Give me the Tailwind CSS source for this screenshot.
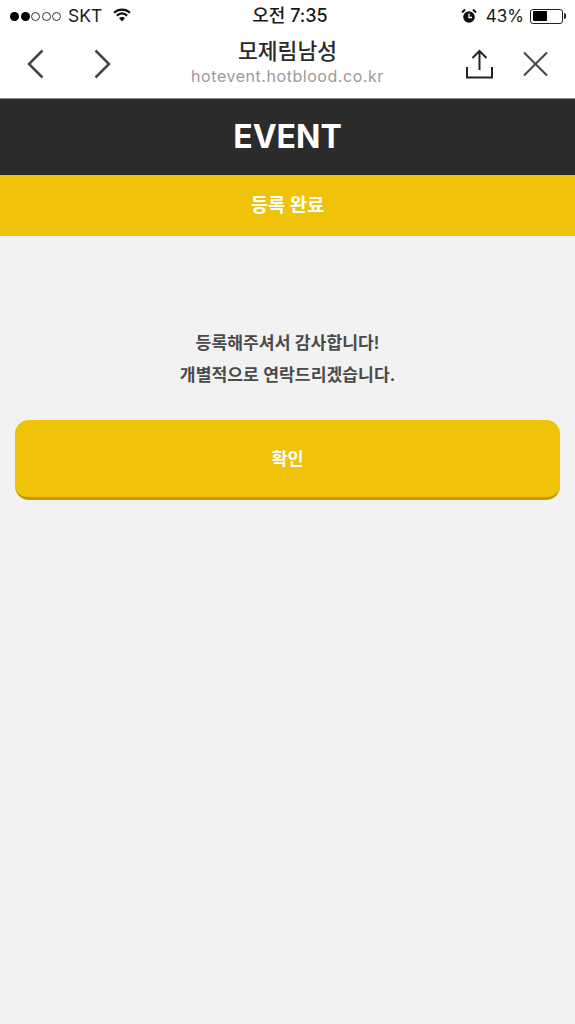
<!doctype html>
<html lang="ko">
<head>
<meta charset="utf-8">
<script src="https://cdn.jsdelivr.net/npm/@tailwindcss/browser@4"></script>
</head>
<body class="bg-[#f2f2f2] font-['Inter','Noto_Sans_CJK_KR',sans-serif]">
<div class="w-[575px] h-[1024px] flex flex-col overflow-hidden">
  <div class="h-[99px] bg-white border-b border-[#8c8c8c] flex flex-col shrink-0 relative">
    <div class="h-[32px] pl-[10px] pr-[9px] grid grid-cols-[1fr_auto_1fr] items-center text-[#1a1a1a]">
      <div class="flex items-center">
        <div class="flex items-center gap-[1.500px]">
          <span class="w-[9px] h-[9px] rounded-full bg-black"></span>
          <span class="w-[9px] h-[9px] rounded-full bg-black"></span>
          <span class="w-[9px] h-[9px] rounded-full border border-[#333]"></span>
          <span class="w-[9px] h-[9px] rounded-full border border-[#333]"></span>
          <span class="w-[9px] h-[9px] rounded-full border border-[#333]"></span>
        </div>
        <span class="ml-[7px] text-[17.500px] leading-none">SKT</span>
        <svg class="ml-[11px] mb-[2px]" width="18" height="14" viewBox="0 0 18 14" fill="none" stroke="#111" stroke-width="2.200"><path d="M1 4.800C5.500 .6 12.500 .6 17 4.800"/><path d="M3.800 7.600C7 4.800 11 4.800 14.200 7.600"/><path d="M9 13.500L6 10C7.800 8.700 10.200 8.700 12 10Z" fill="#111" stroke="none"/></svg>
      </div>
      <div class="pl-[4px] text-[18px] leading-none font-medium text-center">오전 7:35</div>
      <div class="flex items-center justify-end">
        <svg width="16" height="16" viewBox="0 0 16 16"><circle cx="8" cy="9" r="5.800" fill="#111"/><path d="M8 5.500V9.500H11" stroke="#fff" stroke-width="1.300" fill="none"/><path d="M1 4.500L4 1.500M15 4.500L12 1.500" stroke="#111" stroke-width="2"/></svg>
        <span class="ml-[9px] text-[17px] leading-none">43%</span>
        <div class="ml-[6px] mr-[3px] w-[33px] h-[15px] border border-[#222] rounded-[3px] p-[1.500px] relative">
          <div class="w-[14px] h-full bg-black rounded-[1px]"></div>
          <span class="absolute right-[-4px] top-[3.500px] w-[2px] h-[6px] bg-[#222] rounded-r-sm"></span>
        </div>
      </div>
    </div>
    <div class="flex-1 flex items-start justify-between pt-[17px]">
      <div class="flex items-center pl-[27px] gap-[50px]">
        <svg width="17" height="30" viewBox="0 0 17 30" fill="none" stroke="#444" stroke-width="2.500"><path d="M15.500 1.500L2 15L15.500 28.500"/></svg>
        <svg width="17" height="30" viewBox="0 0 17 30" fill="none" stroke="#444" stroke-width="2.500"><path d="M1.500 1.500L15 15L1.500 28.500"/></svg>
      </div>
      <div class="flex items-center pr-[27px] gap-[30px]">
        <svg width="27" height="30" viewBox="0 0 27 30" fill="none" stroke="#222" stroke-width="2"><path d="M13.500 21V2M6.500 9L13.500 2L20.500 9"/><path d="M1 18V28.500H26V18"/></svg>
        <svg width="25" height="26" viewBox="0 0 25 26" fill="none" stroke="#444" stroke-width="2"><path d="M1 1.500L24 24.500M24 1.500L1 24.500"/></svg>
      </div>
    </div>
    <div class="absolute left-0 w-[575px] top-[38px] text-center">
      <div class="text-[21.500px] leading-[27px] font-medium text-[#2a2a2a]">모제림남성</div>
      <div class="text-[16px] leading-[21px] pt-[1px] text-[#9a9a9a] tracking-[0.55px]">hotevent.hotblood.co.kr</div>
    </div>
  </div>
  <div class="h-[76px] shrink-0 bg-[#2b2b2b] flex items-center justify-center text-white text-[32px] font-bold leading-none">EVENT</div>
  <div class="h-[61px] pt-[2px] shrink-0 bg-[#f0c20a] flex items-center justify-center text-white text-[18.800px] font-bold">등록 완료</div>
  <div class="px-[15px] pt-[91px]">
    <div class="text-center text-[#4a4a4a] text-[17.200px] font-semibold leading-[32px]">
      <p>등록해주셔서 감사합니다!</p>
      <p>개별적으로 연락드리겠습니다.</p>
    </div>
    <button class="mt-[29px] pt-[2px] w-full h-[80px] rounded-[14px] bg-[#f0c20a] border-b-[3px] border-[#c29c05] text-white text-[17.500px] font-bold">확인</button>
  </div>
</div>
</body>
</html>
